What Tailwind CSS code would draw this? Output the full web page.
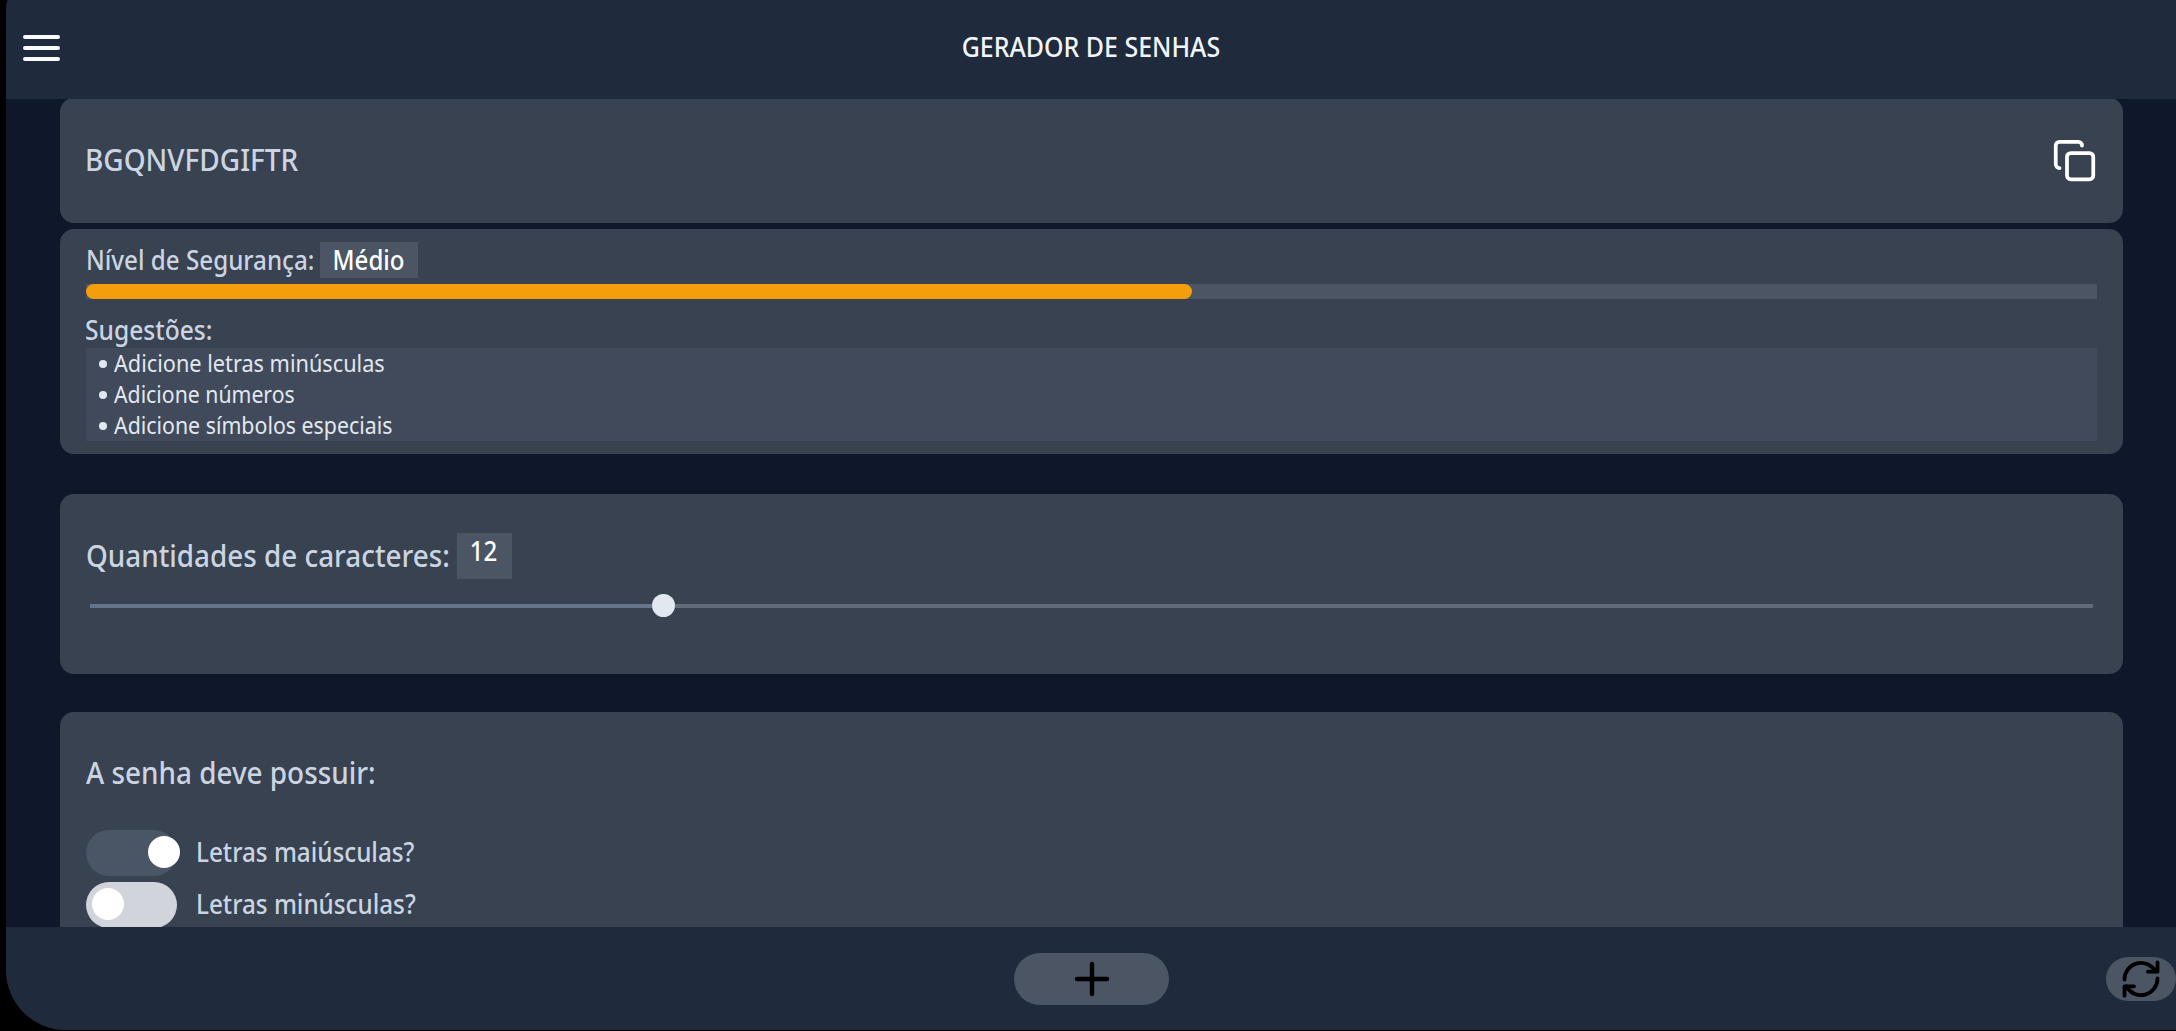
<!DOCTYPE html>
<html lang="pt-BR">
<head>
<meta charset="utf-8">
<title>Gerador de Senhas</title>
<script src="https://cdn.jsdelivr.net/npm/@tailwindcss/browser@4"></script>
</head>
<body class="h-[1031px] w-[2176px] overflow-hidden bg-black pl-[6px] font-['Noto_Sans',sans-serif] font-medium text-[#cbd5e1]">
<div class="flex h-[1030px] flex-col overflow-hidden rounded-bl-[60px] rounded-tl-[2px_14px] bg-[#0f172a]">
  <header class="relative z-10 flex h-[99px] shrink-0 items-center bg-[#1f2a3c]">
    <button class="ml-[17px] flex w-[37px] flex-col gap-[7px] pb-[4px]" aria-label="Menu">
      <span class="h-[4px] rounded-full bg-slate-50"></span>
      <span class="h-[4px] rounded-full bg-slate-50"></span>
      <span class="h-[4px] rounded-full bg-slate-50"></span>
    </button>
    <h1 class="mr-[54px] flex-1 pb-[5px] text-center text-[27px] text-slate-100"><span class="inline-block scale-x-[.924] whitespace-nowrap">GERADOR DE SENHAS</span></h1>
  </header>

  <main class="-mt-px min-h-0 flex-1 overflow-hidden pl-[54px] pr-[53px]">
    <section class="flex h-[125px] items-center justify-between rounded-[14px] bg-[#384251] pl-[25px] pr-[26px]">
      <span class="origin-left scale-x-[.903] pb-[3px] text-[31px]">BGQNVFDGIFTR</span>
      <svg class="size-[45px] text-white" viewBox="0 0 24 24" fill="none" stroke="currentColor" stroke-width="2" stroke-linecap="round" stroke-linejoin="round"><rect x="8" y="8" width="14" height="14" rx="2"/><path d="M4 16c-1.1 0-2-.9-2-2V4c0-1.1.9-2 2-2h10c1.1 0 2 .9 2 2"/></svg>
    </section>

    <section class="mt-[6px] h-[225px] rounded-[14px] bg-[#384251] px-[26px] pt-[13px]">
      <div class="flex h-[36px] items-center text-[27px]">
        <span class="w-[234px] origin-left scale-x-[.896] whitespace-nowrap pt-px">Nível de Segurança:</span>
        <span class="flex h-[36px] w-[98px] items-center justify-center bg-[#4b5563] text-white"><span class="scale-x-[.89] pr-[2px] pt-px">Médio</span></span>
      </div>
      <div class="mt-[6px] h-[15px] bg-[#4b5563]"><div class="h-full rounded-full bg-[#f59e0b]" style="width:55%"></div></div>
      <div class="mt-[11px] flex h-[38px] items-center text-[27px]"><span class="-ml-px origin-left scale-x-[.911] pt-[3px]">Sugestões:</span></div>
      <ul class="bg-[#414a5a] pl-[13px] text-[24px] font-normal leading-[31px] text-slate-200">
        <li class="flex h-[31px] items-center"><span class="mr-[7px] mt-px size-[8px] rounded-full bg-slate-200"></span><span class="origin-left scale-x-[.904] pb-[2px]">Adicione letras minúsculas</span></li>
        <li class="flex h-[31px] items-center"><span class="mr-[7px] mt-px size-[8px] rounded-full bg-slate-200"></span><span class="origin-left scale-x-[.885] pb-[2px]">Adicione números</span></li>
        <li class="flex h-[31px] items-center"><span class="mr-[7px] mt-px size-[8px] rounded-full bg-slate-200"></span><span class="origin-left scale-x-[.889] pb-[2px]">Adicione símbolos especiais</span></li>
      </ul>
    </section>

    <section class="mt-[40px] h-[180px] rounded-[14px] bg-[#384251] px-[26px] pt-[39px]">
      <div class="flex h-[46px] items-center">
        <span class="w-[371px] origin-left scale-x-[.898] whitespace-nowrap pb-[2px] text-[31px]">Quantidades de caracteres:</span>
        <span class="flex h-[46px] w-[55px] justify-center bg-[#4b5563] text-[27px] leading-[35px] text-white"><span class="scale-x-[.89] pr-[2px]">12</span></span>
      </div>
      <div class="mx-1 mt-[15px] flex h-[23px] items-center">
        <div class="h-[4px] bg-[#64748b]" style="width:562px"></div>
        <div class="size-[23px] shrink-0 rounded-full bg-slate-200"></div>
        <div class="h-[4px] flex-1 bg-[#636b79]"></div>
      </div>
    </section>

    <section class="mt-[38px] h-[300px] rounded-[14px] bg-[#384251] px-[26px] pt-[37px]">
      <h2 class="flex h-[46px] items-center text-[31px]"><span class="origin-left scale-x-[.899]">A senha deve possuir:</span></h2>
      <div class="mt-[35px] flex flex-col gap-[6px] text-[27px]">
        <label class="flex h-[46px] items-center">
          <span class="flex h-[46px] w-[91px] items-center rounded-full bg-[#4a5565] pl-[62px]"><span class="mb-[2px] size-[32px] shrink-0 rounded-full bg-white"></span></span>
          <span class="ml-[19px] origin-left scale-x-[.898] pb-px">Letras maiúsculas?</span>
        </label>
        <label class="flex h-[46px] items-center">
          <span class="flex h-[46px] w-[91px] items-center rounded-full bg-[#d1d5db] pl-[6px]"><span class="mb-[2px] size-[32px] shrink-0 rounded-full bg-white"></span></span>
          <span class="ml-[19px] origin-left scale-x-[.898] pb-px">Letras minúsculas?</span>
        </label>
      </div>
    </section>
  </main>

  <footer class="flex h-[103px] shrink-0 items-center bg-[#1f2a3c] pl-[1008px] text-black">
    <button class="flex h-[52px] w-[155px] shrink-0 items-center justify-center rounded-full bg-[#4b5563]" aria-label="Adicionar">
      <svg class="size-[36px]" viewBox="0 0 36 36" fill="none" stroke="currentColor" stroke-width="4.4" stroke-linecap="round"><path d="M18 3v30M3 18h30"/></svg>
    </button>
    <button class="ml-auto flex h-[44px] w-[70px] shrink-0 items-center justify-center rounded-full bg-[#4b5563]" aria-label="Atualizar">
      <svg class="size-[40px]" viewBox="0 0 40 40" fill="none" stroke="currentColor" stroke-width="3.8" stroke-linecap="round" stroke-linejoin="round"><path d="M3.500 20.500A16.500 16.500 0 0 1 34.500 12.500M36.500 19.500A16.500 16.500 0 0 1 5.500 27.500"/><path d="M36.500 3.500V12.700H27M3.500 36.700V27.300H13"/></svg>
    </button>
  </footer>
</div>
</body>
</html>
